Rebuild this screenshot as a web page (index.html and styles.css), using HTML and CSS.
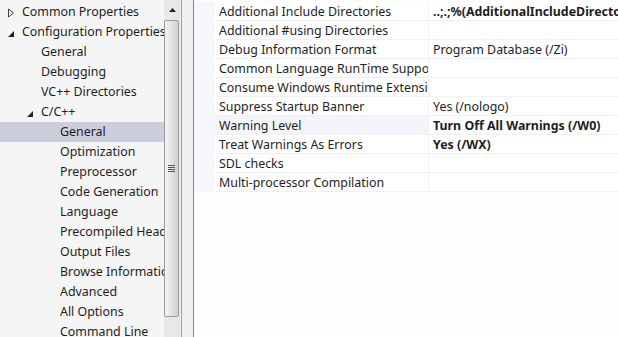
FILE: index.html
```html
<!DOCTYPE html>
<html lang="en">
<head>
  <meta charset="UTF-8">
  <title>Property Pages</title>
  <link rel="stylesheet" href="styles.css">
</head>
<body>
  <div class="tree-pane">
    <ul class="tree">
      <li class="tree-row lvl0">
        <svg class="expander" viewBox="0 0 8 10"><path d="M1.5 1 L6.5 5 L1.5 9 Z" fill="none" stroke="#444" stroke-width="1"/></svg>
        Common Properties
      </li>
      <li class="tree-row lvl0">
        <svg class="expander" viewBox="0 0 8 10"><path d="M7 3 L7 9 L1 9 Z" fill="#222"/></svg>
        Configuration Properties
      </li>
      <li class="tree-row lvl1">General</li>
      <li class="tree-row lvl1">Debugging</li>
      <li class="tree-row lvl1">VC++ Directories</li>
      <li class="tree-row lvl1">
        <svg class="expander" viewBox="0 0 8 10"><path d="M7 3 L7 9 L1 9 Z" fill="#222"/></svg>
        C/C++
      </li>
      <li class="tree-row lvl2 selected">General</li>
      <li class="tree-row lvl2">Optimization</li>
      <li class="tree-row lvl2">Preprocessor</li>
      <li class="tree-row lvl2">Code Generation</li>
      <li class="tree-row lvl2">Language</li>
      <li class="tree-row lvl2">Precompiled Headers</li>
      <li class="tree-row lvl2">Output Files</li>
      <li class="tree-row lvl2">Browse Information</li>
      <li class="tree-row lvl2">Advanced</li>
      <li class="tree-row lvl2">All Options</li>
      <li class="tree-row lvl2">Command Line</li>
    </ul>
  </div>

  <div class="scrollbar">
    <div class="scroll-btn">
      <svg viewBox="0 0 7 4" class="scroll-arrow"><path d="M0 4 L3.5 0 L7 4 Z" fill="#222"/></svg>
    </div>
    <div class="scroll-thumb">
      <div class="grip"><span></span><span></span><span></span><span></span></div>
    </div>
  </div>

  <div class="splitter"></div>

  <div class="grid">
    <div class="prop-row"><div class="gutter"></div><div class="prop-name">Additional Include Directories</div><div class="prop-value bold">..;.;%(AdditionalIncludeDirectories)</div></div>
    <div class="prop-row"><div class="gutter"></div><div class="prop-name">Additional #using Directories</div><div class="prop-value"></div></div>
    <div class="prop-row"><div class="gutter"></div><div class="prop-name">Debug Information Format</div><div class="prop-value">Program Database (/Zi)</div></div>
    <div class="prop-row"><div class="gutter"></div><div class="prop-name">Common Language RunTime Support</div><div class="prop-value"></div></div>
    <div class="prop-row"><div class="gutter"></div><div class="prop-name">Consume Windows Runtime Extension</div><div class="prop-value"></div></div>
    <div class="prop-row"><div class="gutter"></div><div class="prop-name">Suppress Startup Banner</div><div class="prop-value">Yes (/nologo)</div></div>
    <div class="prop-row current"><div class="gutter"></div><div class="prop-name">Warning Level</div><div class="prop-value bold">Turn Off All Warnings (/W0)</div></div>
    <div class="prop-row"><div class="gutter"></div><div class="prop-name">Treat Warnings As Errors</div><div class="prop-value bold">Yes (/WX)</div></div>
    <div class="prop-row"><div class="gutter"></div><div class="prop-name">SDL checks</div><div class="prop-value"></div></div>
    <div class="prop-row"><div class="gutter"></div><div class="prop-name">Multi-processor Compilation</div><div class="prop-value"></div></div>
  </div>
</body>
</html>
```

FILE: styles.css
```css
body {
  margin: 0;
  height: 337px;
  display: flex;
  overflow: hidden;
  background: #f0f0f0;
  font-family: "Noto Sans", "Open Sans", sans-serif;
  font-size: 12.4px;
  color: #1e1e1e;
}

/* Tree */
.tree-pane {
  width: 164px;
  flex: none;
  background: #f5f5f5;
  overflow: hidden;
}

.tree {
  list-style: none;
  margin: 0;
  padding: 2px 0 0 0;
}

.tree-row {
  position: relative;
  height: 20px;
  line-height: 20px;
  white-space: nowrap;
}

.tree-row.lvl0 { padding-left: 22px; }
.tree-row.lvl1 { padding-left: 41px; }
.tree-row.lvl2 { padding-left: 60px; }

.tree-row.selected {
  background: #cccedb;
}

.expander {
  position: absolute;
  top: 6px;
  width: 8px;
  height: 10px;
}

.lvl0 .expander { left: 7px; }
.lvl1 .expander { left: 26px; }

/* Scrollbar */
.scrollbar {
  width: 16px;
  flex: none;
  display: flex;
  flex-direction: column;
  background: #e8e8e8;
}

.scroll-btn {
  height: 20px;
  display: flex;
  justify-content: center;
  align-items: center;
}

.scroll-arrow {
  width: 7px;
  height: 4px;
}

.scroll-thumb {
  height: 295px;
  margin: 0 1px 0 0;
  border: 1px solid #9a9a9a;
  border-radius: 2px;
  background: linear-gradient(to right, #f4f4f4 0%, #e4e4e4 45%, #cfcfcf 100%);
  display: flex;
  align-items: center;
  justify-content: center;
}

.grip {
  display: flex;
  flex-direction: column;
  gap: 1px;
}

.grip span {
  display: block;
  width: 7px;
  height: 1px;
  background: #555;
}

/* Splitter */
.splitter {
  width: 11px;
  flex: none;
  margin-left: 1px;
  background: #f0f0f0;
  border-left: 1px solid #a0a0a0;
  border-right: 1px solid #828790;
}

/* Property grid */
.grid {
  flex: 1;
  background: #fdfdfe;
  padding-top: 2px;
  overflow: hidden;
}

.prop-row {
  display: grid;
  grid-template-columns: 21px 214px 1fr;
  height: 19px;
  box-sizing: border-box;
  white-space: nowrap;
}

.gutter {
  background: #f5f7fb;
}

.prop-name,
.prop-value {
  padding-left: 4px;
  overflow: hidden;
  background: #ffffff;
  line-height: 20px;
  border-bottom: 1px solid #eef0f6;
}

.prop-name {
  border-right: 1px solid #eef0f6;
}

.prop-row.current .prop-name {
  background: #f3f5fa;
}

.bold {
  font-weight: bold;
}
```
